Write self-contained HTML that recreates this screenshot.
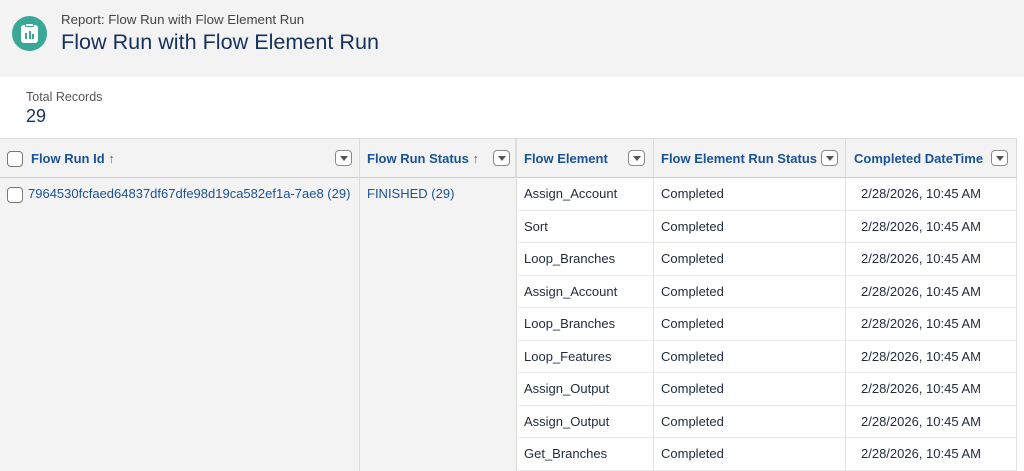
<!DOCTYPE html>
<html><head><style>
*{margin:0;padding:0;box-sizing:border-box}
body{width:1024px;height:471px;overflow:hidden;background:#fff;font-family:"Liberation Sans",Arial,sans-serif;position:relative}
.a{position:absolute}
.hdr{left:0;top:0;width:1024px;height:77px;background:#f3f3f3}
.th{top:138px;height:40px;background:#f3f3f3;border-top:1px solid #dddbda;border-bottom:1px solid #c9ccd4;border-right:1px solid #dddbda;font-size:13px;font-weight:bold;color:#1b5297;line-height:39px}
.dd{position:absolute;top:11px;width:17px;height:16px;border:1px solid #8a8a8a;border-radius:4px;background:#fff}
.dd:after{content:"";position:absolute;left:4px;top:5px;border-left:4px solid transparent;border-right:4px solid transparent;border-top:5px solid #555}
.cb{position:absolute;width:16px;height:16px;border:1px solid #777;border-radius:4px;background:#fff}
.cell{height:32.5px;border-bottom:1px solid #ebebeb;border-right:1px solid #e3e3e3;font-size:13px;color:#1f2a3c;line-height:32px;padding-left:7px;background:#fff}
.col{position:absolute;top:178px}
</style></head><body>
<div class="a hdr"></div>
<div class="a" style="left:12px;top:16px;width:35px;height:35px;border-radius:50%;background:#3ba897"></div>
<div class="a" style="left:21px;top:25px;width:17px;height:18px;border-radius:3px;background:#fff"></div>
<div class="a" style="left:25px;top:23px;width:9px;height:4px;border-radius:1px;background:#fff;border:1px solid #3ba897"></div>
<div class="a" style="left:25px;top:33px;width:2px;height:6px;background:#3ba897"></div>
<div class="a" style="left:28.5px;top:31px;width:2px;height:8px;background:#3ba897"></div>
<div class="a" style="left:32px;top:34px;width:2px;height:5px;background:#3ba897"></div>
<div class="a" style="left:61px;top:12px;font-size:13.3px;color:#444">Report: Flow Run with Flow Element Run</div>
<div class="a" style="left:61px;top:29px;font-size:21.6px;color:#16325c">Flow Run with Flow Element Run</div>
<div class="a" style="left:26px;top:90px;font-size:12.5px;color:#555">Total Records</div>
<div class="a" style="left:26px;top:106px;font-size:18px;color:#16325c">29</div>

<div class="a th" style="left:0;width:360px"><span class="cb" style="left:7px;top:12px"></span><span style="position:absolute;left:31px">Flow Run Id <span style="color:#666;font-weight:normal">&#8593;</span></span><span class="dd" style="left:335px"></span></div>
<div class="a th" style="left:360px;width:157px"><span style="position:absolute;left:7px">Flow Run Status <span style="color:#666;font-weight:normal">&#8593;</span></span><span class="dd" style="left:133px"></span></div>
<div class="a" style="left:515px;top:138px;width:2px;height:333px;background:#dddbda"></div>
<div class="a th" style="left:517px;width:137px"><span style="position:absolute;left:7px">Flow Element</span><span class="dd" style="left:111px"></span></div>
<div class="a th" style="left:654px;width:192px"><span style="position:absolute;left:7px">Flow Element Run Status</span><span class="dd" style="left:167px"></span></div>
<div class="a th" style="left:846px;width:171px"><span style="position:absolute;left:8px">Completed DateTime</span><span class="dd" style="left:145px"></span></div>

<div class="a" style="left:0;top:178px;width:360px;height:293px;background:#f3f3f3;border-right:1px solid #dddbda"></div>
<div class="a" style="left:360px;top:178px;width:156px;height:293px;background:#f3f3f3"></div>
<span class="cb" style="left:7px;top:187px"></span>
<div class="a" style="left:28px;top:186px;font-size:13px;color:#1b5297">7964530fcfaed64837df67dfe98d19ca582ef1a-7ae8 (29)</div>
<div class="a" style="left:367px;top:186px;font-size:13px;color:#1b5297">FINISHED (29)</div>

<div class="col" style="left:517px;width:137px">
<div class="cell">Assign_Account</div><div class="cell">Sort</div><div class="cell">Loop_Branches</div><div class="cell">Assign_Account</div><div class="cell">Loop_Branches</div><div class="cell">Loop_Features</div><div class="cell">Assign_Output</div><div class="cell">Assign_Output</div><div class="cell">Get_Branches</div></div>
<div class="col" style="left:654px;width:192px">
<div class="cell">Completed</div><div class="cell">Completed</div><div class="cell">Completed</div><div class="cell">Completed</div><div class="cell">Completed</div><div class="cell">Completed</div><div class="cell">Completed</div><div class="cell">Completed</div><div class="cell">Completed</div></div>
<div class="col" style="left:846px;width:171px">
<div class="cell" style="padding-left:15px">2/28/2026, 10:45 AM</div><div class="cell" style="padding-left:15px">2/28/2026, 10:45 AM</div><div class="cell" style="padding-left:15px">2/28/2026, 10:45 AM</div><div class="cell" style="padding-left:15px">2/28/2026, 10:45 AM</div><div class="cell" style="padding-left:15px">2/28/2026, 10:45 AM</div><div class="cell" style="padding-left:15px">2/28/2026, 10:45 AM</div><div class="cell" style="padding-left:15px">2/28/2026, 10:45 AM</div><div class="cell" style="padding-left:15px">2/28/2026, 10:45 AM</div><div class="cell" style="padding-left:15px">2/28/2026, 10:45 AM</div></div>
</body></html>
